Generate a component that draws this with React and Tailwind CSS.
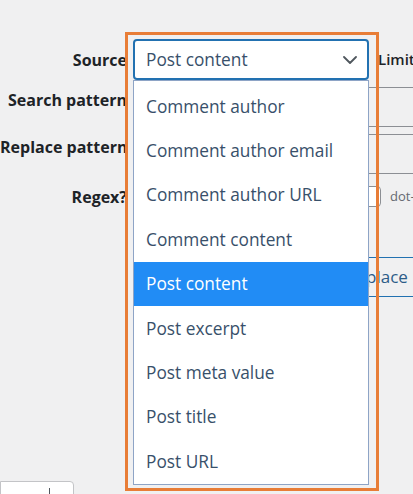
import React from 'react';

const sourceOptions = [
  'Comment author',
  'Comment author email',
  'Comment author URL',
  'Comment content',
  'Post content',
  'Post excerpt',
  'Post meta value',
  'Post title',
  'Post URL',
];

const labelClass = "w-[127px] shrink-0 text-right text-[16px] leading-[20px] font-bold text-[#1d2327] whitespace-nowrap";

const App = () => {
  const selected = 'Post content';

  return (
    <div className="relative w-[413px] h-[494px] overflow-hidden bg-[#f0f0f1] font-['Open_Sans','Liberation_Sans',sans-serif]">
      <div className="pt-[39px]">
        {/* Source row with the select */}
        <div className="flex h-[41px] items-center">
          <div className={labelClass}>Source</div>
          <div className="ml-[6px] w-[236px] h-[41px] shrink-0 rounded-[4px] border-2 border-[#2271b1] bg-white flex items-center justify-between pl-[11px] pr-[10px]">
            <span className="text-[17.3px] text-[#38506a] whitespace-nowrap">{selected}</span>
            <svg width="14" height="8" viewBox="0 0 14 8" fill="none">
              <polyline points="1,1 7,7 13,1" stroke="#50575e" strokeWidth="1.8" strokeLinecap="round" strokeLinejoin="round" />
            </svg>
          </div>
          <div className="ml-[9px] text-[15px] font-semibold text-[#1d2327] whitespace-nowrap">Limit</div>
        </div>

        {/* Search pattern */}
        <div className="mt-[7px] flex h-[40px] items-start">
          <div className={`${labelClass} pt-[3px]`}>Search pattern</div>
          <div className="ml-[6px] w-[300px] h-[40px] shrink-0 rounded-[4px] border border-[#8c8f94]" />
        </div>

        {/* Replace pattern */}
        <div className="mt-[7px] flex h-[40px] items-start">
          <div className={`${labelClass} pt-[3px]`}>Replace pattern</div>
          <div className="ml-[6px] w-[300px] h-[40px] shrink-0 rounded-[4px] border border-[#8c8f94]" />
        </div>

        {/* Regex */}
        <div className="mt-[12px] flex h-[21px] items-center">
          <div className={labelClass}>Regex?</div>
          <div className="ml-[233px] w-[21px] h-[21px] shrink-0 rounded-[4px] border border-[#8c8f94] bg-white" />
          <span className="ml-[9px] text-[13px] text-[#646970] whitespace-nowrap">dot-all</span>
        </div>

        {/* Replace button */}
        <div className="mt-[50px] flex h-[40px] pl-[335px]">
          <button className="h-[40px] shrink-0 rounded-[3px] border border-[#2271b1] px-[10px] text-[17px] text-[#2c5c88] whitespace-nowrap">
            Replace
          </button>
        </div>

        {/* bottom tab */}
        <div className="mt-[184px] w-[74px] h-[20px] bg-white border border-[#c3c4c7] rounded-tr-[4px] pl-[48px] pt-[6px]">
          <div className="w-px h-[8px] bg-[#50575e]" />
        </div>
      </div>

      {/* open dropdown list */}
      <ul className="absolute left-[133px] top-[80px] w-[236px] h-[405px] border border-[#8ea4c6] bg-white pt-[3.4px]">
        {sourceOptions.map(opt => (
          <li
            key={opt}
            className={`h-[44.4px] flex items-center px-[12px] text-[17.3px] whitespace-nowrap ${opt === selected ? 'bg-[#218cf5] text-white' : 'text-[#38506a]'}`}
          >
            {opt}
          </li>
        ))}
      </ul>

      {/* annotation frame */}
      <div className="absolute left-[125px] top-[32px] w-[254px] h-[459px] border-[3px] border-[#e87d37] pointer-events-none" />
    </div>
  );
};

export default App;
